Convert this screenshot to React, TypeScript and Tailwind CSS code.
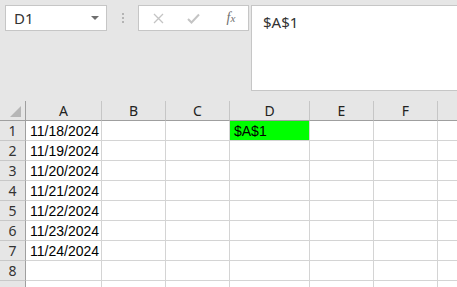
import { ReactNode } from 'react';

const columns = [
  { label: 'A', width: 'w-[76px]' },
  { label: 'B', width: 'w-[64px]' },
  { label: 'C', width: 'w-[64px]' },
  { label: 'D', width: 'w-[80px]' },
  { label: 'E', width: 'w-[64px]' },
  { label: 'F', width: 'w-[64px]' },
  { label: '', width: 'w-[64px]' },
];

const dates = ['11/18/2024', '11/19/2024', '11/20/2024', '11/21/2024', '11/22/2024', '11/23/2024', '11/24/2024'];

const uiFont = "font-['Noto_Sans',sans-serif]";
const cellFont = "font-['Liberation_Sans',Arial,sans-serif]";

export default function App() {
  return (
    <div className="flex h-[287px] w-[457px] flex-col overflow-hidden bg-[#e6e6e6]">
      <FormulaBar />
      <Sheet />
    </div>
  );
}

function FormulaBar() {
  return (
    <div className="flex h-[101px] shrink-0 items-start pt-[5px]">
      <div className={`ml-[5px] flex h-[26px] w-[102px] items-center justify-between border border-[#c6c6c6] bg-white pl-[8px] pr-[7px] text-[15px] text-[#333] ${uiFont}`}>
        <span>D1</span>
        <svg width="8" height="4" viewBox="0 0 8 4">
          <polygon points="0,0 8,0 4,4" fill="#6f6f6f" />
        </svg>
      </div>
      <div className="ml-[15px] flex h-[26px] flex-col items-center justify-center gap-[2px]">
        <div className="h-[2px] w-[2px] bg-[#b4b4b4]" />
        <div className="h-[2px] w-[2px] bg-[#b4b4b4]" />
        <div className="h-[2px] w-[2px] bg-[#b4b4b4]" />
      </div>
      <div className="ml-[14px] flex h-[26px] w-[111px] items-center border border-[#c6c6c6] bg-white">
        <div className="flex w-[36px] justify-center pl-[2px]">
          <svg width="11" height="11" viewBox="0 0 11 11">
            <path d="M1 1 L10 10 M10 1 L1 10" stroke="#c4c4c4" strokeWidth="1.3" />
          </svg>
        </div>
        <div className="flex w-[36px] justify-center">
          <svg width="13" height="11" viewBox="0 0 13 11">
            <path d="M1 6 L4.5 9.5 L12 1.5" stroke="#c4c4c4" strokeWidth="2" fill="none" />
          </svg>
        </div>
        <div className="flex w-[36px] justify-center pl-[4px] font-['Liberation_Serif',serif] text-[14px] italic text-[#6f6f6f]">
          <span>f</span>
          <span className="text-[11px] leading-[22px]">x</span>
        </div>
      </div>
      <div className={`ml-[2px] h-[86px] flex-1 border border-[#c6c6c6] border-r-0 bg-white pl-[11px] pt-[5px] text-[15px] text-[#333] ${uiFont}`}>
        $A$1
      </div>
    </div>
  );
}

function Sheet() {
  return (
    <div className="flex flex-col">
      <div className="flex h-[20px] shrink-0">
        <div className="flex h-[20px] w-[26px] shrink-0 items-end justify-end border-r border-b border-[#9f9f9f] pr-[4px] pb-[3px]">
          <svg width="11" height="11" viewBox="0 0 11 11">
            <polygon points="11,0 11,11 0,11" fill="#b6b6b6" />
          </svg>
        </div>
        {columns.map((c, i) => (
          <HeaderCell key={i} width={c.width}>
            {c.label}
          </HeaderCell>
        ))}
      </div>
      {Array.from({ length: 9 }).map((_, r) => (
        <div key={r} className="flex h-[20px] shrink-0">
          <div className={`flex h-[20px] w-[26px] shrink-0 items-center justify-center border-r border-b border-r-[#9f9f9f] border-b-[#c8c8c8] text-[14px] text-[#333] ${uiFont}`}>
            {r < 8 ? r + 1 : ''}
          </div>
          {columns.map((c, i) => {
            let content: ReactNode = null;
            let bg = 'bg-white';
            if (i === 0 && r < 7) content = dates[r];
            if (i === 3 && r === 0) {
              content = '$A$1';
              bg = 'bg-[#00ff00]';
            }
            return (
              <div
                key={i}
                className={`flex h-[20px] shrink-0 items-center border-r border-b border-[#d4d4d4] pl-[4px] pt-[1px] text-[14px] text-black ${cellFont} ${c.width} ${bg}`}
              >
                {content}
              </div>
            );
          })}
        </div>
      ))}
    </div>
  );
}

function HeaderCell({ width, children }: { width: string; children: ReactNode }) {
  return (
    <div
      className={`flex h-[20px] shrink-0 items-center justify-center border-r border-b border-r-[#c6c6c6] border-b-[#9f9f9f] text-[14px] text-[#222] ${uiFont} ${width}`}
    >
      {children}
    </div>
  );
}
